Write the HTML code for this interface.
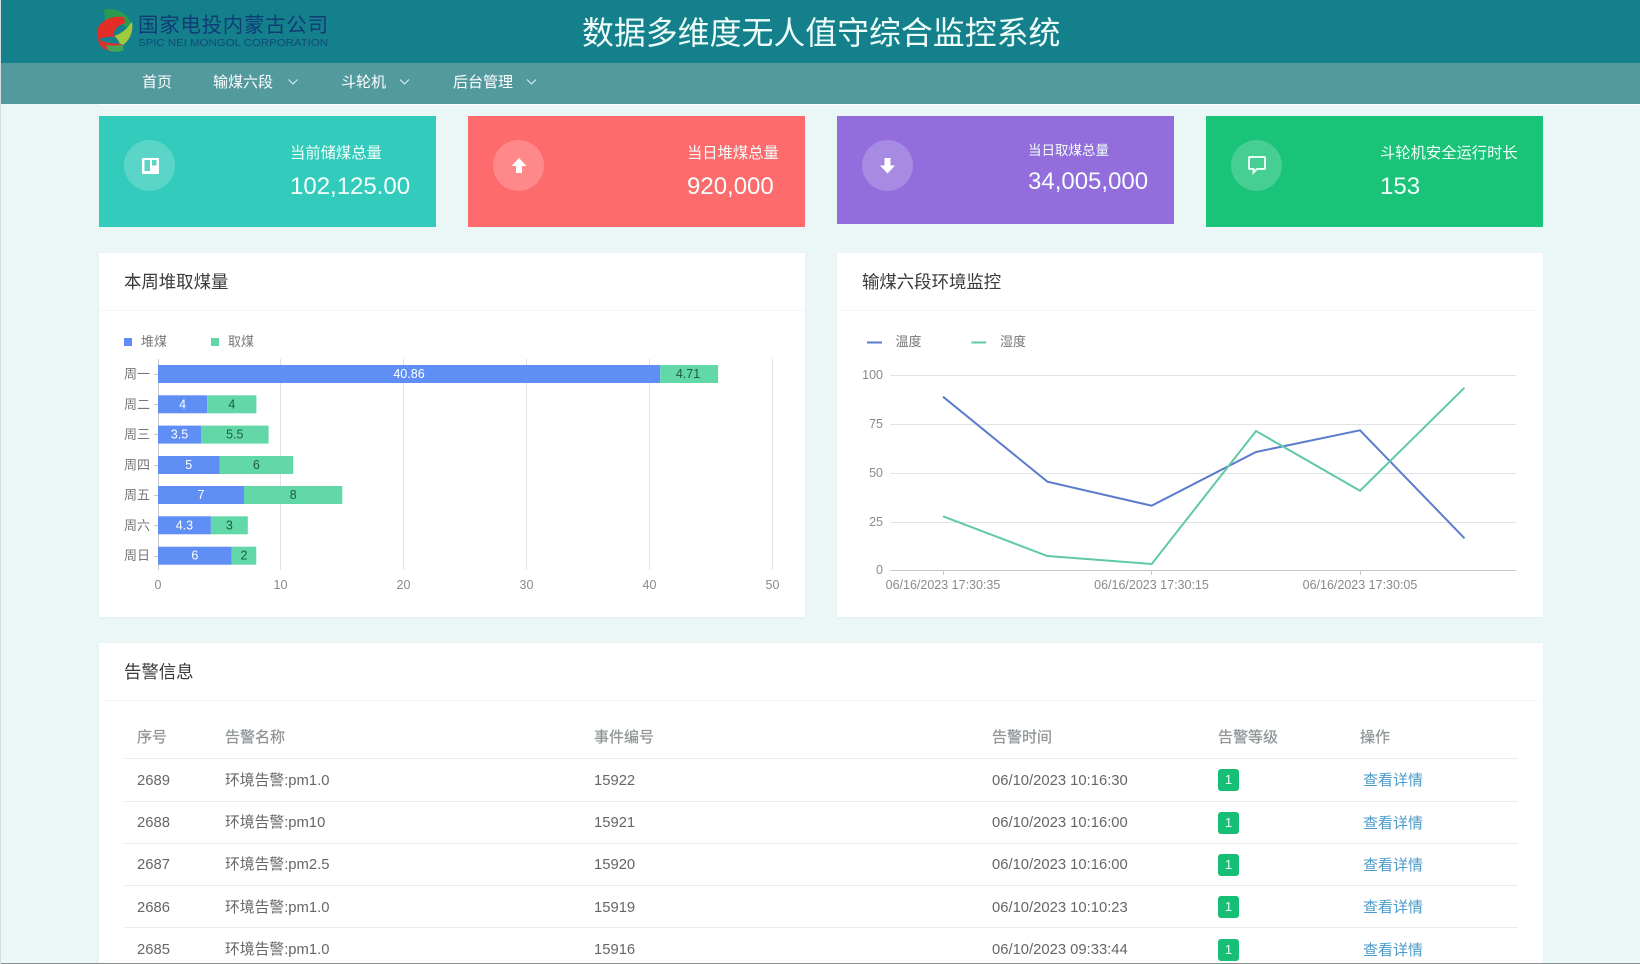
<!DOCTYPE html>
<html lang="zh-CN">
<head>
<meta charset="utf-8">
<title>数据多维度无人值守综合监控系统</title>
<style>
*{box-sizing:border-box;margin:0;padding:0}
html,body{width:1640px;height:964px;overflow:hidden;background:#ebf6f7;font-family:"Liberation Sans","Noto Sans CJK SC",sans-serif}
.a{position:absolute}
.t{position:absolute;white-space:nowrap;line-height:24px;height:24px}
#hd{left:0;top:0;width:1640px;height:63px;background:#14808c}
#nv{left:0;top:63px;width:1640px;height:41px;background:#539a9f}
#ln{left:99px;top:104px;width:1541px;height:1px;background:#fff}
.nav{color:#fff;font-size:15px}
.card{top:116px;width:337px;height:111px}
.circ{width:51px;height:51px;border-radius:50%;background:rgba(255,255,255,.2);top:140px}
.lab{color:#f2fffb;font-size:15.3px}
.num{color:#f4fffc;font-size:24px}
.pn{background:#fff;box-shadow:0 1px 3px rgba(0,0,0,.03)}
.dv{height:1px;background:#f3f6f6}
.ttl{font-size:17.4px;color:#3a3a3a}
.th{font-size:15px;color:#8f9497;-webkit-text-stroke:.25px #8f9497}
.td{font-size:14.8px;color:#666}
.rl{left:124px;width:1394px;height:1px;background:#e9ecec}
.bd{left:1218px;width:21px;height:22px;background:#17bf76;border-radius:3px;color:#e6fff3;font-size:13px;line-height:22px;text-align:center}
.lk{font-size:15px;color:#4a9bc9}
</style>
</head>
<body>
<div class="a" id="hd"></div>
<div class="a" id="nv"></div>
<div class="a" id="ln"></div>

<div class="t" style="left:582px;top:10px;height:46px;line-height:46px;font-size:31.9px;color:#eefdfa">数据多维度无人值守综合监控系统</div>

<div class="t nav" style="left:142px;top:70.500px">首页</div>
<div class="t nav" style="left:213px;top:70.500px">输煤六段</div>
<div class="t nav" style="left:341px;top:70.500px">斗轮机</div>
<div class="t nav" style="left:453px;top:70.500px">后台管理</div>

<div class="a card" style="left:99px;background:#33cbbb"></div>
<div class="a card" style="left:468px;background:#fe6b6d"></div>
<div class="a card" style="left:837px;height:108px;background:#926ddb"></div>
<div class="a card" style="left:1206px;background:#19c378"></div>

<div class="a circ" style="left:124px"></div>
<div class="a circ" style="left:493px"></div>
<div class="a circ" style="left:862px"></div>
<div class="a circ" style="left:1231px"></div>

<div class="t lab" style="left:290px;top:142px">当前储煤总量</div>
<div class="t num" style="left:290px;top:175px">102,125.00</div>
<div class="t lab" style="left:687px;top:142px">当日堆煤总量</div>
<div class="t num" style="left:687px;top:175px">920,000</div>
<div class="t lab" style="left:1028px;top:139px;font-size:13.5px">当日取煤总量</div>
<div class="t num" style="left:1028px;top:170px">34,005,000</div>
<div class="t lab" style="left:1380px;top:142px">斗轮机安全运行时长</div>
<div class="t num" style="left:1380px;top:175px">153</div>

<div class="a pn" style="left:99px;top:253px;width:706px;height:364px"></div>
<div class="a pn" style="left:837px;top:253px;width:706px;height:364px"></div>
<div class="a pn" style="left:99px;top:643px;width:1444px;height:321px"></div>
<div class="a dv" style="left:99px;top:310px;width:706px"></div>
<div class="a dv" style="left:840px;top:310px;width:695px"></div>
<div class="a dv" style="left:104px;top:700px;width:1434px"></div>

<div class="t ttl" style="left:124px;top:270px">本周堆取煤量</div>
<div class="t ttl" style="left:862px;top:270px">输煤六段环境监控</div>
<div class="t ttl" style="left:124px;top:660px">告警信息</div>

<div class="t th" style="left:137px;top:726px">序号</div>
<div class="t th" style="left:225px;top:726px">告警名称</div>
<div class="t th" style="left:594px;top:726px">事件编号</div>
<div class="t th" style="left:992px;top:726px">告警时间</div>
<div class="t th" style="left:1218px;top:726px">告警等级</div>
<div class="t th" style="left:1360px;top:726px">操作</div>

<div class="a rl" style="top:758px"></div>
<div class="a rl" style="top:801px"></div>
<div class="a rl" style="top:843px"></div>
<div class="a rl" style="top:885px"></div>
<div class="a rl" style="top:927px"></div>

<div class="t td" style="left:137px;top:769px">2689</div>
<div class="t td" style="left:225px;top:769px">环境告警:pm1.0</div>
<div class="t td" style="left:594px;top:769px">15922</div>
<div class="t td" style="left:992px;top:769px">06/10/2023 10:16:30</div>
<div class="a bd" style="top:769px">1</div>
<div class="t lk" style="left:1363px;top:769px">查看详情</div>

<div class="t td" style="left:137px;top:811px">2688</div>
<div class="t td" style="left:225px;top:811px">环境告警:pm10</div>
<div class="t td" style="left:594px;top:811px">15921</div>
<div class="t td" style="left:992px;top:811px">06/10/2023 10:16:00</div>
<div class="a bd" style="top:812px">1</div>
<div class="t lk" style="left:1363px;top:812px">查看详情</div>

<div class="t td" style="left:137px;top:853px">2687</div>
<div class="t td" style="left:225px;top:853px">环境告警:pm2.5</div>
<div class="t td" style="left:594px;top:853px">15920</div>
<div class="t td" style="left:992px;top:853px">06/10/2023 10:16:00</div>
<div class="a bd" style="top:854px">1</div>
<div class="t lk" style="left:1363px;top:854px">查看详情</div>

<div class="t td" style="left:137px;top:896px">2686</div>
<div class="t td" style="left:225px;top:896px">环境告警:pm1.0</div>
<div class="t td" style="left:594px;top:896px">15919</div>
<div class="t td" style="left:992px;top:896px">06/10/2023 10:10:23</div>
<div class="a bd" style="top:896px">1</div>
<div class="t lk" style="left:1363px;top:896px">查看详情</div>

<div class="t td" style="left:137px;top:938px">2685</div>
<div class="t td" style="left:225px;top:938px">环境告警:pm1.0</div>
<div class="t td" style="left:594px;top:938px">15916</div>
<div class="t td" style="left:992px;top:938px">06/10/2023 09:33:44</div>
<div class="a bd" style="top:939px">1</div>
<div class="t lk" style="left:1363px;top:939px">查看详情</div>

<svg class="a" style="left:0;top:0" width="1640" height="964" viewBox="0 0 1640 964" font-family="'Liberation Sans','Noto Sans CJK SC',sans-serif">
  <!-- logo -->
  <path d="M103 10C114 7 128 12 131 24L129 29C122 23 114 20 104 20C106 17 105 13 103 10Z" fill="#2b9a50"/>
  <path d="M132 22C134 33 128 43 120 47C120 42 118 39 114 36C121 34 127 29 130 24Z" fill="#9fca3e"/>
  <path d="M124 17C108 15 96 24 97 34C97 37 98 38 100 39C104 37 110 36 115 37C112 32 116 26 125 23Z" fill="#e52d28"/>
  <path d="M98 38C102 43 110 43 122 44L124 50C116 53 106 52 101 46C99 44 98 41 98 38Z" fill="#dd322c"/>
  <path d="M108 50C114 53 120 52 124 50L122 44.500C118 46 112 46 106 45Z" fill="#3fa75b"/>
  <text x="138" y="32" font-size="20.500" textLength="190" lengthAdjust="spacing" fill="#113c76">国家电投内蒙古公司</text>
  <text x="138" y="46" font-size="10.500" textLength="190" lengthAdjust="spacingAndGlyphs" fill="#0f4a78">SPIC NEI MONGOL CORPORATION</text>

  <!-- nav chevrons -->
  <g fill="none" stroke="#dff2f2" stroke-width="1">
    <path d="M288.500 79.500L293 84L297.500 79.500"/>
    <path d="M400 79.500L404.500 84L409 79.500"/>
    <path d="M527 79.500L531.500 84L536 79.500"/>
  </g>

  <!-- card icons -->
  <path fill-rule="evenodd" d="M143 158H158A1 1 0 0 1 159 159V173A1 1 0 0 1 158 174H143A1 1 0 0 1 142 173V159A1 1 0 0 1 143 158ZM144.500 160V171H150V160ZM152 160V165.500H156.500V160Z" fill="#fff"/>
  <path d="M519 158L526.500 166H522V173H516V166H511.500Z" fill="#fff"/>
  <path d="M887.500 173.500L880 165.500H884.500V158H890.500V165.500H895Z" fill="#fff"/>
  <path d="M1250 157H1264A1 1 0 0 1 1265 158V168A1 1 0 0 1 1264 169H1257L1253.500 172.500V169H1250A1 1 0 0 1 1249 168V158A1 1 0 0 1 1250 157Z" fill="none" stroke="#e6fff4" stroke-width="2"/>

  <!-- left legend -->
  <rect x="124" y="338" width="8" height="8" fill="#5f8ff5"/>
  <rect x="211" y="338" width="8" height="8" fill="#62d8a9"/>
  <g font-size="13" fill="#777" dominant-baseline="central">
    <text x="141" y="341.500">堆煤</text>
    <text x="228" y="341.500">取煤</text>
  </g>

  <!-- bar grid -->
  <g stroke="#dfe2e4" stroke-width="1">
    <path d="M280.500 359V570M403.500 359V570M526.500 359V570M649.500 359V570M772.500 359V570"/>
  </g>
  <path d="M158.500 359V570" stroke="#c4c8cc"/>
  <g stroke="#ccc">
    <path d="M154 374.500H158M154 404.500H158M154 434.500H158M154 465.500H158M154 495.500H158M154 525.500H158M154 556.500H158"/>
  </g>

  <!-- bars -->
  <g fill="#5f8ff5">
    <rect x="158" y="365" width="502.200" height="18"/>
    <rect x="158" y="395.300" width="49.200" height="18"/>
    <rect x="158" y="425.600" width="43" height="18"/>
    <rect x="158" y="456" width="61.500" height="18"/>
    <rect x="158" y="486" width="86" height="18"/>
    <rect x="158" y="516.300" width="52.900" height="18"/>
    <rect x="158" y="546.700" width="73.700" height="18"/>
  </g>
  <g fill="#62d8a9">
    <rect x="660.200" y="365" width="57.900" height="18"/>
    <rect x="207.200" y="395.300" width="49.200" height="18"/>
    <rect x="201" y="425.600" width="67.600" height="18"/>
    <rect x="219.500" y="456" width="73.700" height="18"/>
    <rect x="244" y="486" width="98.300" height="18"/>
    <rect x="210.900" y="516.300" width="36.900" height="18"/>
    <rect x="231.700" y="546.700" width="24.600" height="18"/>
  </g>
  <g font-size="12.500" text-anchor="middle" dominant-baseline="central" fill="#fff">
    <text x="409" y="374">40.86</text>
    <text x="182.600" y="404.300">4</text>
    <text x="179.500" y="434.700">3.5</text>
    <text x="188.700" y="465">5</text>
    <text x="201" y="495">7</text>
    <text x="184.400" y="525.300">4.3</text>
    <text x="194.900" y="555.700">6</text>
  </g>
  <g font-size="12.500" text-anchor="middle" dominant-baseline="central" fill="#1f5a45">
    <text x="688" y="374">4.71</text>
    <text x="231.800" y="404.300">4</text>
    <text x="234.800" y="434.700">5.5</text>
    <text x="256.300" y="465">6</text>
    <text x="293.200" y="495">8</text>
    <text x="229.300" y="525.300">3</text>
    <text x="244" y="555.700">2</text>
  </g>
  <g font-size="13" text-anchor="end" dominant-baseline="central" fill="#777">
    <text x="150" y="374">周一</text>
    <text x="150" y="404.300">周二</text>
    <text x="150" y="434.700">周三</text>
    <text x="150" y="465">周四</text>
    <text x="150" y="495">周五</text>
    <text x="150" y="525.300">周六</text>
    <text x="150" y="555.700">周日</text>
  </g>
  <g font-size="12.500" text-anchor="middle" dominant-baseline="central" fill="#8a8a8a">
    <text x="158" y="585">0</text>
    <text x="280.500" y="585">10</text>
    <text x="403.500" y="585">20</text>
    <text x="526.500" y="585">30</text>
    <text x="649.500" y="585">40</text>
    <text x="772.500" y="585">50</text>
  </g>

  <!-- line chart legend -->
  <path d="M867 342.500H882" stroke="#5b7ccd" stroke-width="2"/>
  <path d="M971.500 342.500H986" stroke="#5fc9a4" stroke-width="2"/>
  <g font-size="13" fill="#777" dominant-baseline="central">
    <text x="895.500" y="341.500">温度</text>
    <text x="1000" y="341.500">湿度</text>
  </g>

  <!-- line grid -->
  <g stroke="#e0e3e5">
    <path d="M890.500 375.500H1516M890.500 424.500H1516M890.500 473.500H1516M890.500 522.500H1516"/>
  </g>
  <path d="M890.500 570.500H1516" stroke="#c4c8cc"/>
  <path d="M943.500 570V575M1151.500 570V575M1360.500 570V575" stroke="#c4c8cc"/>
  <g font-size="12.500" text-anchor="end" dominant-baseline="central" fill="#8a8a8a">
    <text x="883" y="375">100</text>
    <text x="883" y="424">75</text>
    <text x="883" y="473">50</text>
    <text x="883" y="522">25</text>
    <text x="883" y="570">0</text>
  </g>
  <g font-size="12.500" text-anchor="middle" dominant-baseline="central" fill="#8a8a8a">
    <text x="943" y="585">06/16/2023 17:30:35</text>
    <text x="1151.500" y="585">06/16/2023 17:30:15</text>
    <text x="1360" y="585">06/16/2023 17:30:05</text>
  </g>
  <polyline points="943,396.700 1047.400,481.700 1151.700,505.700 1256,452 1360,430.300 1464.500,538.300" fill="none" stroke="#5b7ccd" stroke-width="2"/>
  <polyline points="943,516.300 1047.400,556 1151.700,564 1256,431 1360,490.700 1464.500,387.700" fill="none" stroke="#5fc9a4" stroke-width="2"/>

  <!-- edges -->
  <rect x="0" y="963" width="1640" height="1" fill="#8a8f90"/>
  <rect x="0" y="0" width="1" height="964" fill="#d5dfe0"/>
</svg>
</body>
</html>
